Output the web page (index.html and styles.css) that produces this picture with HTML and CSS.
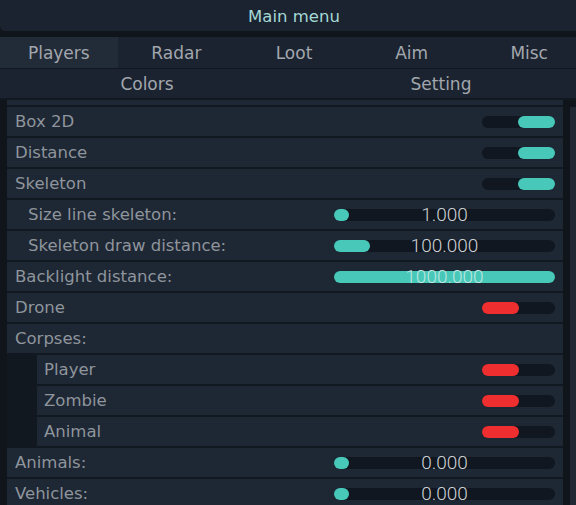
FILE: index.html
```html
<!DOCTYPE html>
<html>
<head>
<meta charset="utf-8">
<link rel="stylesheet" href="styles.css">
</head>
<body>
<div class="menu">
  <div class="title">Main menu</div>
  <div class="tabs">
    <div class="tab active">Players</div>
    <div class="tab">Radar</div>
    <div class="tab">Loot</div>
    <div class="tab">Aim</div>
    <div class="tab">Misc</div>
  </div>
  <div class="subtabs">
    <div class="tab">Colors</div>
    <div class="tab">Setting</div>
  </div>
  <div class="body">
    <div class="list">
      <div class="row partial"></div>
      <div class="row"><span class="label">Box 2D</span><span class="toggle on"><span class="knob"></span></span></div>
      <div class="row"><span class="label">Distance</span><span class="toggle on"><span class="knob"></span></span></div>
      <div class="row"><span class="label">Skeleton</span><span class="toggle on"><span class="knob"></span></span></div>
      <div class="row sub"><span class="label">Size line skeleton:</span><span class="slider"><span class="fill" style="width:15px"></span><span class="value">1.000</span></span></div>
      <div class="row sub"><span class="label">Skeleton draw distance:</span><span class="slider"><span class="fill" style="width:36px"></span><span class="value">100.000</span></span></div>
      <div class="row"><span class="label">Backlight distance:</span><span class="slider"><span class="fill" style="width:221px"></span><span class="value on-fill">1000.000</span></span></div>
      <div class="row"><span class="label">Drone</span><span class="toggle off"><span class="knob"></span></span></div>
      <div class="row"><span class="label">Corpses:</span></div>
      <div class="group">
        <div class="row"><span class="label">Player</span><span class="toggle off"><span class="knob"></span></span></div>
        <div class="row"><span class="label">Zombie</span><span class="toggle off"><span class="knob"></span></span></div>
        <div class="row"><span class="label">Animal</span><span class="toggle off"><span class="knob"></span></span></div>
      </div>
      <div class="row"><span class="label">Animals:</span><span class="slider"><span class="fill" style="width:15px"></span><span class="value">0.000</span></span></div>
      <div class="row"><span class="label">Vehicles:</span><span class="slider"><span class="fill" style="width:15px"></span><span class="value">0.000</span></span></div>
    </div>
    <div class="scroll"><div class="thumb"></div></div>
  </div>
</div>
</body>
</html>
```

FILE: styles.css
```css
html, body {
  margin: 0;
  padding: 0;
  background: #10151c;
  overflow: hidden;
}
body {
  width: 576px;
  height: 505px;
  font-family: "DejaVu Sans", "Liberation Sans", sans-serif;
}
.menu {
  width: 588px;
  display: flex;
  flex-direction: column;
}
.title {
  height: 31px;
  background: #1b2330;
  border-radius: 0 0 5px 5px;
  color: #a4d8d5;
  font-size: 16.5px;
  display: flex;
  align-items: center;
  justify-content: center;
  padding-top: 2px;
  box-sizing: border-box;
  margin-bottom: 6px;
}
.tabs {
  display: grid;
  grid-template-columns: repeat(5, 1fr);
  height: 31px;
  background: #1b2330;
  border-bottom: 1px solid #121820;
}
.subtabs {
  display: grid;
  grid-template-columns: repeat(2, 1fr);
  height: 29px;
  background: #1b2330;
  border-bottom: 2px solid #121820;
}
.tab {
  display: flex;
  align-items: center;
  justify-content: center;
  color: #a2a7ad;
  font-size: 17px;
}
.tab.active {
  background: #222b38;
}
.body {
  display: flex;
  padding-left: 7px;
}
.list {
  width: 556px;
  display: flex;
  flex-direction: column;
  gap: 2px;
  background: #121820;
}
.row {
  height: 29px;
  flex: none;
  display: flex;
  align-items: center;
  padding: 0 8px;
  background: #1e2734;
}
.row.partial {
  height: 5px;
}
.row.sub {
  padding-left: 21px;
}
.group {
  display: flex;
  flex-direction: column;
  gap: 2px;
  padding-left: 30px;
}
.group .row {
  padding-left: 7px;
}
.label {
  color: #8f959c;
  font-size: 16.5px;
  white-space: nowrap;
}
.toggle {
  margin-left: auto;
  width: 73px;
  height: 12px;
  border-radius: 6px;
  background: #111720;
  display: flex;
}
.knob {
  width: 37px;
  height: 12px;
  border-radius: 6px;
}
.toggle.on {
  justify-content: flex-end;
}
.toggle.on .knob {
  background: #47c8b8;
}
.toggle.off .knob {
  background: #ef2e2f;
}
.slider {
  margin-left: auto;
  width: 221px;
  height: 12px;
  border-radius: 6px;
  background: #111720;
  display: grid;
}
.fill {
  grid-area: 1 / 1;
  justify-self: start;
  height: 12px;
  border-radius: 6px;
  background: #47c8b8;
}
.value {
  grid-area: 1 / 1;
  justify-self: center;
  align-self: center;
  line-height: 12px;
  font-family: Roboto, "DejaVu Sans", sans-serif;
  font-weight: 300;
  font-size: 19px;
  color: #cdd1d5;
}
.value.on-fill {
  color: #bfe6e1;
}
.scroll {
  margin-left: 7px;
  padding-top: 7px;
  width: 18px;
}
.thumb {
  height: 420px;
  background: #1f2833;
}
```
